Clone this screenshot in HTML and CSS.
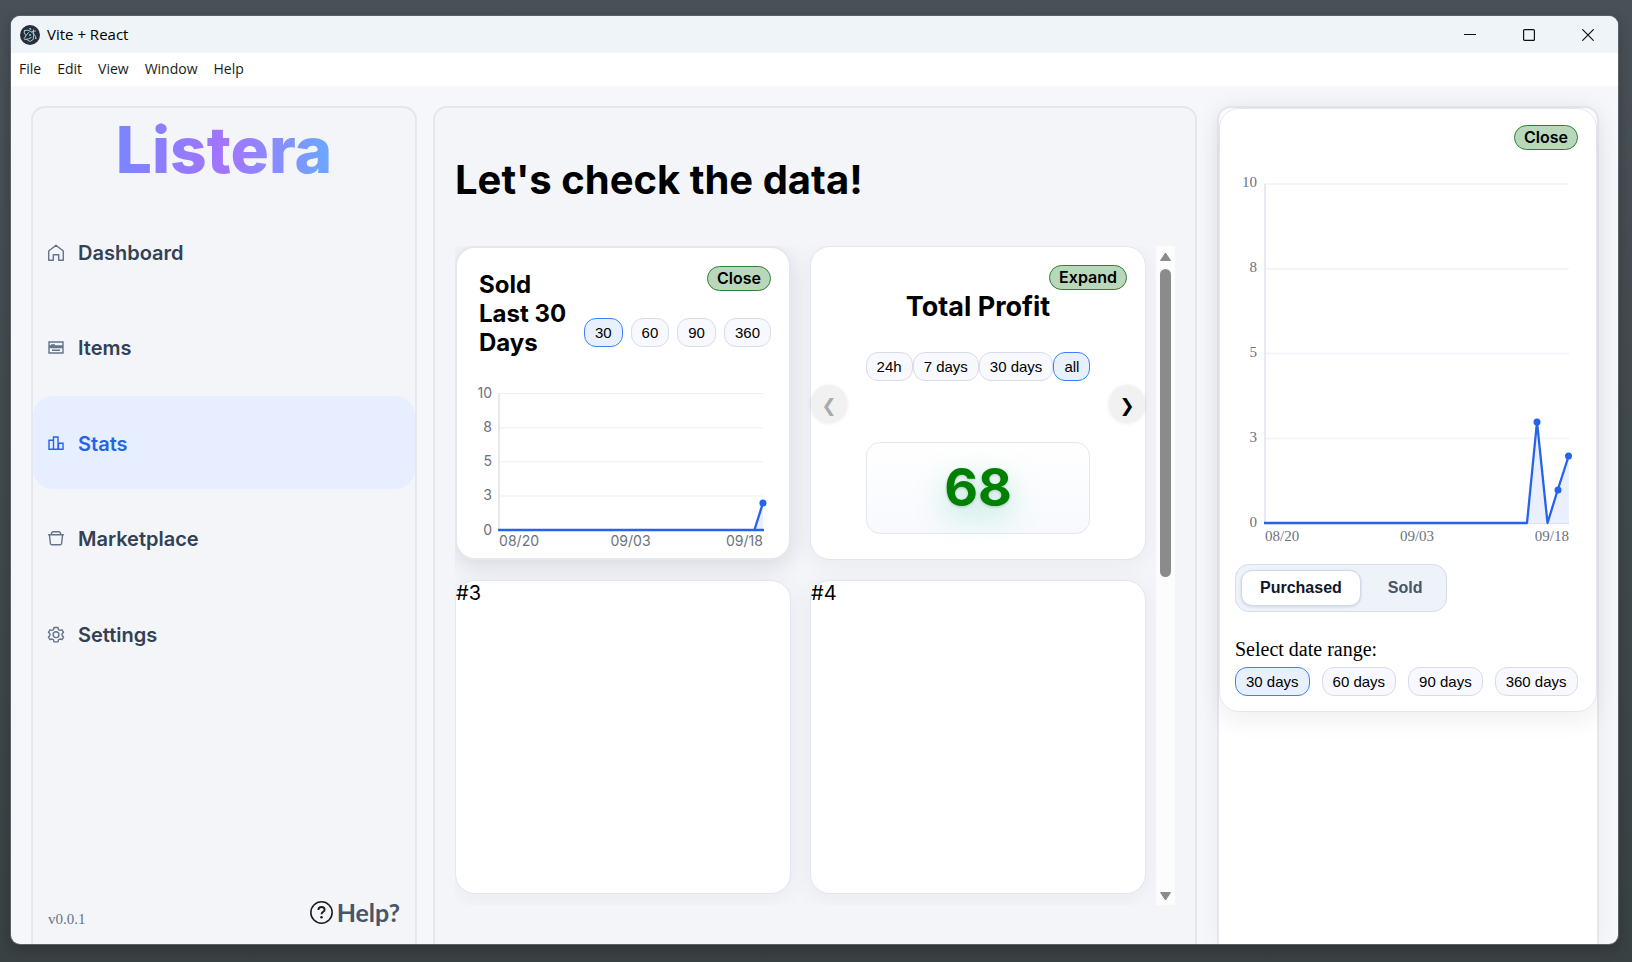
FILE: index.html
```html
<!DOCTYPE html>
<html lang="en">
<head>
<meta charset="utf-8">
<title>Vite + React</title>
<link rel="stylesheet" href="styles.css">
</head>
<body>
<div class="window">
  <header class="titlebar">
    <svg class="app-icon" viewBox="0 0 20 20" aria-hidden="true">
      <circle cx="10" cy="10" r="10" fill="#2b2e3a"/>
      <g fill="none" stroke="#9fdbe6" stroke-width=".9" stroke-linecap="round" stroke-linejoin="round">
        <path d="M4.500 5.500l3.500-.3 3 1.500 3.500 3 1.500 3.200M4.500 5.500l-.3 2.500 1.800 2.500-1.800 3 .5 1 3.500-.5 3-1.500M8.500 7.500l-2.500 3M10 3.600l1 1.200M13.500 4.800l.2 5-.5 4.500M15.500 6l-3.500.5M6.800 14.500l3.200 2 2.800-1.800"/>
      </g>
      <circle cx="10" cy="10" r=".9" fill="#9fdbe6"/><circle cx="10" cy="3.800" r=".8" fill="#9fdbe6"/><circle cx="15.700" cy="13.300" r=".8" fill="#9fdbe6"/>
    </svg>
    <span class="titlebar-text">Vite + React</span>
    <div class="window-controls">
      <button class="window-control" aria-label="Minimize"><svg viewBox="0 0 12 12"><path d="M0 5.500h12"/></svg></button>
      <button class="window-control" aria-label="Maximize"><svg viewBox="0 0 12 12"><rect x=".6" y=".6" width="10.800" height="10.800" rx="1"/></svg></button>
      <button class="window-control" aria-label="Close window"><svg viewBox="0 0 12 12"><path d="M.3.3l11.400 11.400M11.700.3L.3 11.700"/></svg></button>
    </div>
  </header>
  <nav class="menubar" aria-label="Menu bar">
    <button>File</button><button>Edit</button><button>View</button><button>Window</button><button>Help</button>
  </nav>

  <div class="layout">
    <aside class="panel sidebar">
      <div class="logo"><span>Listera</span></div>
      <nav class="nav" aria-label="Main">
        <a class="nav-item" href="#">
          <svg viewBox="0 0 16 16"><path d="M.7 6L8 .200l7.300 5.800v9.200h-4.600V9.700H5.300v5.500H.7z" stroke-linejoin="round"/></svg>Dashboard</a>
        <a class="nav-item" href="#">
          <svg viewBox="0 0 16 16"><path d="M1 2h14v4H1zM1 7.500h14V13H1zM3 5h4M4 10.300h8M1 6.800h14"/></svg>Items</a>
        <a class="nav-item nav-item-active" href="#">
          <svg viewBox="0 0 16 16"><path d="M1 4.200h4.500v9H1zM5.500 1H10v12.200H5.500zM10.500 7.200H15v6h-4.500z"/></svg>Stats</a>
        <a class="nav-item" href="#">
          <svg viewBox="0 0 16 16"><path d="M.6 3.700h14.800M1.400 3.700l1 8.600c.1.900.7 1.500 1.600 1.500h8c.9 0 1.500-.6 1.600-1.500l1-8.600M3.300 3.700c.1-2 .9-2.900 2.200-2.900h5c1.300 0 2.100.9 2.200 2.900" stroke-linecap="round"/></svg>Marketplace</a>
        <a class="nav-item" href="#">
          <svg viewBox="0 0 16 16"><path d="M6 .5h4l.5 2 1.500.9 2-.6 1.500 2.500-1.400 1.500v1.800l1.400 1.500-1.500 2.500-2-.6-1.500.9-.5 2H6l-.5-2-1.500-.9-2 .6-1.500-2.500 1.400-1.500V6.800L.5 5.300 2 2.800l2 .6 1.500-.9z" stroke-linejoin="round"/><circle cx="8" cy="7.700" r="2.900"/></svg>Settings</a>
      </nav>
      <footer class="sidebar-footer">
        <span class="version">v0.0.1</span>
        <a class="help" href="#">
          <svg viewBox="0 0 22 22" aria-hidden="true"><circle cx="11" cy="11" r="10.200" fill="none" stroke="#1c1c1c" stroke-width="1.500"/><path d="M8 8.500c0-1.700 1.300-2.800 3-2.800s3 1.100 3 2.700c0 1.900-3 2.100-3 4.300" fill="none" stroke="#1c1c1c" stroke-width="1.800"/><circle cx="11" cy="15.600" r="1.200" fill="#1c1c1c"/></svg>Help?</a>
      </footer>
    </aside>

    <main class="panel main">
      <h1>Let's check the data!</h1>
      <div class="board">
        <div class="cards">
          <section class="card card-sold">
            <div class="sold-head">
              <h2>Sold Last 30 Days</h2>
              <div class="sold-actions">
                <button class="pill">Close</button>
                <div class="chips">
                  <button class="chip chip-on" aria-pressed="true">30</button>
                  <button class="chip">60</button>
                  <button class="chip">90</button>
                  <button class="chip">360</button>
                </div>
              </div>
            </div>
            <svg class="chart" viewBox="0 0 291 168" role="img" aria-label="Sold over the last 30 days">
              <path class="grid-line" d="M20 12.500h263M20 46.500h263M20 80.500h263M20 114.500h263"/>
              <path class="axis-line" d="M20 12v137"/>
              <path class="area" d="M274.500 148.500l8.500-27v27z"/>
              <path class="series" d="M19 148.500h265M274.500 148.500l8.500-27"/>
              <circle class="dot" cx="283" cy="121.500" r="3.500"/>
              <g class="tick" text-anchor="end"><text x="13" y="17">10</text><text x="13" y="51">8</text><text x="13" y="85">5</text><text x="13" y="119">3</text><text x="13" y="153">0</text><text x="283" y="164">09/18</text></g>
              <g class="tick"><text x="20" y="164">08/20</text><text x="151" y="164" text-anchor="middle">09/03</text></g>
            </svg>
          </section>

          <section class="card card-profit">
            <button class="pill pill-corner">Expand</button>
            <button class="arrow arrow-prev" aria-label="Previous" disabled>❮</button>
            <button class="arrow arrow-next" aria-label="Next">❯</button>
            <div class="profit-body">
              <h2>Total Profit</h2>
              <div class="chips chips-joined">
                <button class="chip">24h</button><button class="chip">7 days</button><button class="chip">30 days</button><button class="chip chip-on" aria-pressed="true">all</button>
              </div>
              <div class="profit-box">68</div>
            </div>
          </section>

          <section class="card">#3</section>
          <section class="card">#4</section>
        </div>
        <div class="scrollbar" aria-hidden="true">
          <svg viewBox="0 0 12 10"><path d="M6 1L11 8.500H1z"/></svg>
          <div class="scroll-track"><div class="scroll-thumb"></div></div>
          <svg viewBox="0 0 12 10"><path d="M6 9L1 1.500h10z"/></svg>
        </div>
      </div>
    </main>

    <aside class="panel detail">
      <section class="detail-card">
        <button class="pill">Close</button>
        <svg class="chart" viewBox="0 0 343 382" role="img" aria-label="Purchased over the last 30 days">
          <path class="grid-line grid-wide" d="M30 18h304M30 103h304M30 187.500h304M30 272.500h304"/>
          <path class="axis-line" d="M30 18v339M30 357.500h304"/>
          <path class="area" d="M292 357l10-101 10.500 101 10.500-34 11-34v68z"/>
          <path class="series" d="M29 357h263l10-101 10.500 101 10.500-34 11-34"/>
          <circle class="dot" cx="302" cy="256" r="3.500"/><circle class="dot" cx="323" cy="324" r="3.500"/><circle class="dot" cx="333.500" cy="290" r="3.500"/>
          <g class="tick" text-anchor="end"><text x="22" y="21">10</text><text x="22" y="106">8</text><text x="22" y="191">5</text><text x="22" y="276">3</text><text x="22" y="361">0</text><text x="334" y="375">09/18</text></g>
          <g class="tick"><text x="30" y="375">08/20</text><text x="182" y="375" text-anchor="middle">09/03</text></g>
        </svg>
        <div class="toggle">
          <button class="toggle-on" aria-pressed="true">Purchased</button>
          <button>Sold</button>
        </div>
        <p class="range-label">Select date range:</p>
        <div class="chips chips-wide">
          <button class="chip chip-on" aria-pressed="true">30 days</button>
          <button class="chip">60 days</button>
          <button class="chip">90 days</button>
          <button class="chip">360 days</button>
        </div>
      </section>
    </aside>
  </div>
</div>
</body>
</html>
```
FILE: styles.css
```css
* { box-sizing: border-box; }

body {
  margin: 0;
  height: 100vh;
  display: flex;
  padding: 16px 14px 18px 11px;
  background: linear-gradient(#495157, #3a4143);
  font-family: Inter, "Liberation Sans", sans-serif;
  color: #000;
}

button { font: inherit; color: inherit; margin: 0; cursor: pointer; }
a { text-decoration: none; }
h1, h2, p { margin: 0; }

.window {
  flex: 1;
  display: flex;
  flex-direction: column;
  min-width: 0;
  overflow: hidden;
  border-radius: 9px;
  background: #f5f7fb;
  box-shadow: 0 0 0 1px #5b6266, 0 4px 14px rgba(0, 0, 0, .25);
}

/* Title bar and menu */
.titlebar {
  display: flex;
  align-items: center;
  gap: 7px;
  height: 37px;
  padding: 0 1px 0 9px;
  background: #eef4f7;
  font: 15px/20px "Open Sans", sans-serif;
}
.titlebar-text { padding-bottom: 2px; }
.app-icon { width: 20px; height: 20px; }
.window-controls { display: flex; margin-left: auto; }
.window-control {
  display: flex;
  justify-content: center;
  width: 59px;
  padding: 12px 0;
  border: 0;
  background: none;
}
.window-control svg { width: 12px; height: 12px; fill: none; stroke: #111; stroke-width: 1.2; }
.menubar {
  display: flex;
  gap: 16px;
  height: 33px;
  padding: 0 8px;
  background: #fff;
  font: 14px "Open Sans", sans-serif;
}
.menubar button { padding: 0 0 2px; border: 0; background: none; color: #1a1a1a; }

/* Three column layout */
.layout {
  flex: 1;
  min-height: 0;
  display: grid;
  grid-template-columns: 386fr 768fr 382fr;
  gap: 16px;
  padding: 20px 19px 0 20px;
}
.panel {
  display: flex;
  flex-direction: column;
  min-width: 0;
  border: 2px solid #e5e7eb;
  border-bottom: 0;
  border-radius: 14px 14px 0 0;
  background: #f3f5f9;
}

/* Sidebar */
.logo {
  padding-bottom: 13px;
  text-align: center;
  font: 800 64px/84px Inter, sans-serif;
}
.logo span {
  background: linear-gradient(90deg, #7a85ff, #a374ff 50%, #6aa8ff);
  -webkit-background-clip: text;
  background-clip: text;
  color: transparent;
}
.nav {
  display: flex;
  flex-direction: column;
  justify-content: space-between;
  min-height: 475px;
}
.nav-item {
  display: flex;
  align-items: center;
  gap: 14px;
  height: 93px;
  padding: 2px 15px 0;
  border-radius: 20px;
  font-size: 20px;
  font-weight: 600;
  color: #334155;
}
.nav-item svg { width: 16px; height: 16px; overflow: visible; fill: none; stroke: #64748b; stroke-width: 1.4; }
.nav-item-active { background: #e7eeff; color: #2563eb; }
.nav-item-active svg { stroke: #2563eb; }
.sidebar-footer {
  display: flex;
  justify-content: space-between;
  align-items: flex-end;
  margin-top: auto;
  padding: 0 15px 16px;
}
.version { font: 15px/18px "Liberation Serif", serif; color: #64748b; }
.help {
  display: flex;
  align-items: center;
  gap: 4px;
  font: 700 25px/32px Lato, sans-serif;
  color: #475569;
}
.help svg { width: 23px; height: 23px; }

/* Main board */
.main { margin-right: 4px; padding: 48px 20px 39px; }
.main h1 { padding-bottom: 42px; font-size: 40px; line-height: 48px; font-weight: 700; }
.board { flex: 1; display: flex; min-height: 0; }
.cards {
  flex: 1;
  display: grid;
  grid-template-columns: 1fr 1fr;
  grid-auto-rows: minmax(314px, auto);
  align-content: start;
  gap: 20px 19px;
  padding-right: 10px;
  overflow: hidden;
}
.card {
  position: relative;
  min-width: 0;
  border: 1px solid #e3e6f0;
  border-radius: 20px;
  background: #fff;
  box-shadow: 0 4px 24px rgba(30, 41, 59, .05);
  font-size: 20px;
}
.card-sold {
  padding: 18px 18px 0 22px;
  border-width: 2px;
  border-color: #e5e7ef;
  box-shadow: 0 6px 22px rgba(15, 23, 42, .12);
}
.sold-head { display: flex; gap: 12px; }
.sold-head h2 { flex: 1; padding-top: 4px; font-size: 24px; line-height: 29px; font-weight: 700; }
.sold-actions { display: flex; flex-direction: column; align-items: flex-end; gap: 27px; }

.pill {
  height: 25px;
  padding: 0 9px;
  border: 1px solid #2e8135;
  border-radius: 13px;
  background: #b9d7ba;
  font: 600 16px/23px Inter, sans-serif;
}
.pill-corner { position: absolute; top: 18px; right: 18px; z-index: 1; }

.chips { display: flex; gap: 8px; }
.chips-joined { gap: 0; }
.chips-wide { gap: 12px; }
.chip {
  padding: 5px 10px;
  border: 1px solid #d8dce8;
  border-radius: 12px;
  background: #f8f9fe;
  font: 15px/17px "Liberation Sans", sans-serif;
  white-space: nowrap;
}
.chip-on { border-color: #3b82f6; background: #e8f0fe; }

/* Charts */
.chart { display: block; width: 100%; margin-top: 24px; overflow: visible; }
.grid-line { stroke: #eef0f7; }
.grid-wide { stroke: #f4f5fa; stroke-width: 2; }
.axis-line { fill: none; stroke: #dfe2ee; stroke-width: 1.5; }
.area { fill: #e9effd; }
.series { fill: none; stroke: #2563eb; stroke-width: 2.300; stroke-linejoin: round; }
.dot { fill: #2563eb; }
.tick { fill: #6b7280; font-size: 14px; }

/* Profit card */
.card-profit { display: flex; justify-content: center; }
.profit-body { display: flex; flex-direction: column; align-items: stretch; padding-top: 43px; text-align: center; }
.profit-body h2 { font-size: 27px; line-height: 34px; font-weight: 700; }
.profit-body .chips { padding: 28px 0 61px; }
.profit-box {
  padding: 14px 0;
  border: 1px solid #e5e7eb;
  border-radius: 14px;
  background: linear-gradient(#fff, #f7f9fd);
  font-size: 52px;
  line-height: 62px;
  font-weight: 700;
  color: #008000;
  text-shadow: 0 1px 3px rgba(0, 0, 0, .2), 0 10px 30px rgba(16, 185, 129, .35);
}
.arrow {
  position: absolute;
  top: 138px;
  width: 36px;
  height: 37px;
  padding: 4px 0 0;
  border: 0;
  border-radius: 50%;
  background: #f1f1f1;
  box-shadow: 0 1px 4px rgba(0, 0, 0, .1);
  font: 18px/20px "DejaVu Sans", sans-serif;
  color: #000;
}
.arrow:disabled { color: #aaa; }
.arrow-prev { left: 0; }
.arrow-next { right: 0; }

/* Scrollbar */
.scrollbar {
  display: flex;
  flex-direction: column;
  align-items: center;
  gap: 7px;
  width: 19px;
  padding: 6px 0 4px;
  background: #fcfcfc;
}
.scrollbar svg { width: 13px; height: 10px; fill: #8b8b8b; stroke: #8b8b8b; stroke-linejoin: round; }
.scroll-track { flex: 1; width: 11px; }
.scroll-thumb { height: 50%; border-radius: 6px; background: #8b8b8b; }

/* Detail panel */
.detail { background: #fff; font-family: "Liberation Serif", serif; box-shadow: 0 0 24px rgba(30, 41, 59, .05); }
.detail-card {
  display: flex;
  flex-direction: column;
  align-items: flex-start;
  padding: 16px 18px 15px 15px;
  border: 1px solid #e5e7ef;
  border-radius: 20px;
  background: #fff;
  box-shadow: 0 8px 24px rgba(15, 23, 42, .07);
}
.detail-card .pill { align-self: flex-end; }
.detail-card .chart { margin-top: 16px; }
.detail-card .tick { font-size: 15px; }
.toggle {
  display: flex;
  gap: 8px;
  margin-top: 16px;
  padding: 5px;
  border: 1px solid #d5dce8;
  border-radius: 14px;
  background: #eef2f9;
}
.toggle button {
  height: 36px;
  padding: 0 18px;
  border: 1px solid transparent;
  border-radius: 11px;
  background: none;
  font: 700 16px "Liberation Sans", sans-serif;
  color: #475569;
}
.toggle .toggle-on {
  border-color: #cfd8e6;
  background: #fff;
  color: #0f172a;
  box-shadow: 0 1px 3px rgba(15, 23, 42, .12);
}
.range-label { margin: 25px 0 6px; font-size: 20px; line-height: 24px; }
```
